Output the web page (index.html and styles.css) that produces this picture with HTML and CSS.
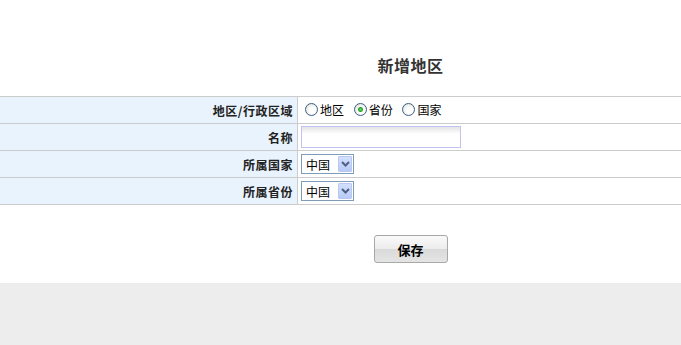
FILE: index.html
```html
<!DOCTYPE html>
<html lang="zh-CN">
<head>
    <meta charset="UTF-8">
    <title>新增地区</title>
    <link rel="stylesheet" href="styles.css">
</head>
<body>
    <div class="page">
        <h2 class="title">新增地区</h2>

        <table class="form-table">
            <tr>
                <td class="label">地区/行政区域</td>
                <td class="value">
                    <label class="radio"><input type="radio" name="level">地区</label>
                    <label class="radio"><input type="radio" name="level" checked>省份</label>
                    <label class="radio"><input type="radio" name="level">国家</label>
                </td>
            </tr>
            <tr>
                <td class="label">名称</td>
                <td class="value"><input type="text" class="text-input"></td>
            </tr>
            <tr>
                <td class="label">所属国家</td>
                <td class="value">
                    <span class="select-wrap">
                        <select><option>中国</option></select>
                        <span class="select-arrow">
                            <svg width="9" height="6" viewBox="0 0 9 6"><path d="M1 1 L4.5 4.5 L8 1" fill="none" stroke="#4d6185" stroke-width="2"/></svg>
                        </span>
                    </span>
                </td>
            </tr>
            <tr>
                <td class="label">所属省份</td>
                <td class="value">
                    <span class="select-wrap">
                        <select><option>中国</option></select>
                        <span class="select-arrow">
                            <svg width="9" height="6" viewBox="0 0 9 6"><path d="M1 1 L4.5 4.5 L8 1" fill="none" stroke="#4d6185" stroke-width="2"/></svg>
                        </span>
                    </span>
                </td>
            </tr>
        </table>

        <div class="actions">
            <button type="button">保存</button>
        </div>
    </div>
</body>
</html>
```

FILE: styles.css
```css
body {
    margin: 0;
    background-color: #ededed;
    font-family: "Noto Sans CJK SC", "DejaVu Sans", sans-serif;
    font-size: 12px;
    color: #000;
}

.page {
    height: 283px;
    background-color: #fff;
}

.title {
    margin: 0;
    padding: 55px 0 0 140px;
    height: 96px;
    box-sizing: border-box;
    line-height: 20px;
    font-size: 16px;
    font-weight: bold;
    letter-spacing: 0.5px;
    color: #333;
    text-align: center;
}

.form-table {
    width: 100%;
    border-collapse: separate;
    border-spacing: 0;
    border-top: 1px solid #cccccc;
}

.form-table td {
    height: 26px;
    padding: 0;
    border-bottom: 1px solid #cccccc;
    vertical-align: middle;
}

.form-table .label {
    width: 298px;
    box-sizing: border-box;
    padding-right: 4px;
    background-color: #e8f3fd;
    border-right: 1px solid #cccccc;
    text-align: right;
    font-weight: bold;
    letter-spacing: 0.5px;
    color: #222;
}

.form-table .value {
    padding-left: 3px;
}

.radio {
    display: inline-flex;
    align-items: center;
    margin-right: 3px;
}

.radio input {
    appearance: none;
    width: 13px;
    height: 13px;
    margin: 0 2px 0 4px;
    border: 1px solid #3a5f86;
    border-radius: 50%;
    box-sizing: border-box;
    background: radial-gradient(circle at 60% 60%, #ffffff 30%, #d8d8d0 100%);
}

.radio input:checked {
    background:
        radial-gradient(circle, #6fe06f 0, #21a121 2px, transparent 3px),
        radial-gradient(circle at 60% 60%, #ffffff 30%, #d8d8d0 100%);
}

.text-input {
    width: 160px;
    height: 22px;
    box-sizing: border-box;
    margin: 0;
    border: 1px solid #c3c3f3;
    background: linear-gradient(#e4e4e4, #ffffff 7px);
    outline: none;
    vertical-align: middle;
}

.select-wrap {
    position: relative;
    display: inline-block;
    vertical-align: middle;
}

.select-wrap select {
    appearance: none;
    width: 53px;
    height: 20px;
    margin: 0;
    padding: 0 0 0 4px;
    border: 1px solid #7f9db9;
    border-radius: 0;
    background-color: #fff;
    font-family: inherit;
    font-size: 12px;
    color: #000;
    display: block;
}

.select-arrow {
    position: absolute;
    top: 2px;
    right: 2px;
    width: 14px;
    height: 16px;
    box-sizing: border-box;
    border: 1px solid #b7c9f2;
    border-radius: 1px;
    background: linear-gradient(#d3e0fd, #b8cbf7);
    display: flex;
    align-items: center;
    justify-content: center;
    pointer-events: none;
}

.actions {
    padding: 30px 0 0 140px;
    text-align: center;
}

button {
    width: 74px;
    height: 28px;
    border: 1px solid #a8a8a8;
    border-radius: 3px;
    background: linear-gradient(#fafafa, #ececec 50%, #dadada 51%, #e4e4e4);
    font-family: inherit;
    font-size: 13px;
    font-weight: bold;
    color: #000;
    cursor: pointer;
}
```
